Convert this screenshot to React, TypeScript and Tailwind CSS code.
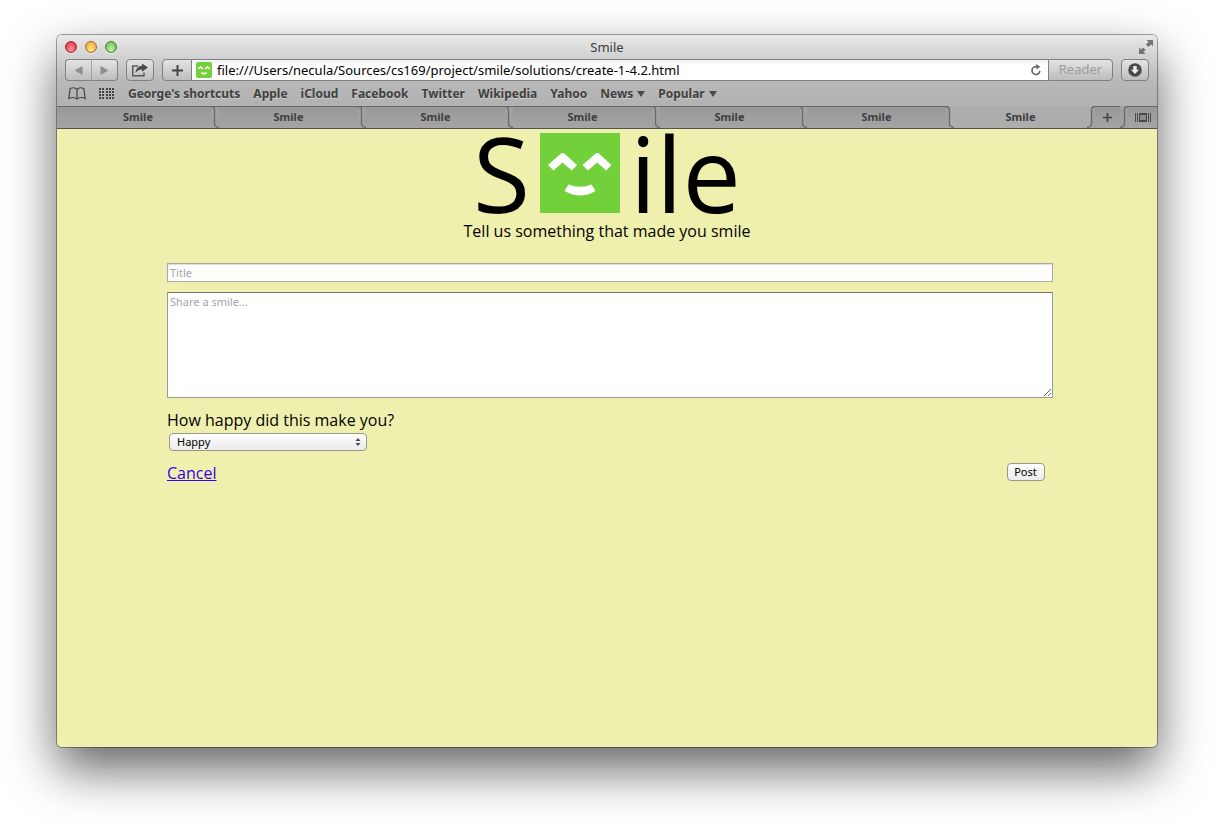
import type { ReactNode } from 'react';

const chromeButton =
  'flex h-[22px] items-center justify-center border border-[#808080] bg-linear-to-b from-[#e4e4e4] to-[#bdbdbd] text-[#444]';

function TrafficLight({ label, tone }: { label: string; tone: string }) {
  return (
    <button
      aria-label={label}
      className={`size-3 rounded-full border shadow-[0_1px_0_#f4f4f4] ${tone}`}
    />
  );
}

function ShareIcon() {
  return (
    <svg width="18" height="14" viewBox="0 0 18 14" fill="none">
      <path d="M7 3H1.700v9.800h11.300V9.500" stroke="#5a5a5a" strokeWidth="1.500" />
      <path d="M11 .5l6 4.1-6 4.1V6.500C8.500 6.400 6.300 7.300 4.500 10 4.800 5.500 7.500 2.900 11 2.700z" fill="#4a4a4a" />
    </svg>
  );
}

function BookIcon() {
  return (
    <svg width="18" height="13" viewBox="0 0 18 13" fill="none" stroke="#444" strokeWidth="1.2">
      <path d="M9 2.500C7.500.700 4.500.500 2.200 1.500L.800 11.500C3.500 10.300 7 10.300 9 12c2-1.700 5.500-1.700 8.200-.500L15.800 1.500C13.500.500 10.500.700 9 2.500zM9 2.500V12" />
    </svg>
  );
}

function GridIcon() {
  return (
    <svg width="16" height="12" viewBox="0 0 16 12" fill="#444" shapeRendering="crispEdges">
      {[0, 3, 6, 9].map((y) =>
        [0, 3, 6, 9, 12].map((x) => <rect key={`${x}-${y}`} x={x + (x > 0 ? x / 12 : 0)} y={y} width="2" height="2" />),
      )}
    </svg>
  );
}

function PlusIcon({ size }: { size: number }) {
  return (
    <svg width={size} height={size} viewBox="0 0 11 11" stroke="#444" strokeWidth="2">
      <path d="M5.500 0v11M0 5.500h11" />
    </svg>
  );
}

function ReloadIcon() {
  return (
    <svg width="12" height="12" viewBox="0 0 12 12" fill="none">
      <path d="M7.500 2.700H5.800a3.900 3.900 0 1 0 4 4.200" stroke="#666" strokeWidth="1.700" />
      <path d="M6.300 0v5.500L10.300 2.700z" fill="#666" />
    </svg>
  );
}

function DownloadIcon() {
  return (
    <svg width="14" height="14" viewBox="0 0 14 14">
      <circle cx="7" cy="7" r="6.800" fill="#4a4a4a" />
      <path d="M5.300 3h3.400v3.700h2.300L7 11 3 6.700h2.300z" fill="#eee" />
    </svg>
  );
}

function FullScreenIcon() {
  return (
    <svg width="14" height="14" viewBox="0 0 14 14" fill="#747474">
      <path d="M7.500 0H14v6.500l-2-2-2.600 2.600L6.900 4.600 9.500 2z" />
      <path d="M6.500 14H0V7.500l2 2L4.100 7.400l2.500 2.500L4.500 12z" />
    </svg>
  );
}

function ShowTabsIcon() {
  return (
    <svg width="16" height="9" viewBox="0 0 16 9" stroke="#4a4a4a" fill="none">
      <path d="M.500 0v9M2.500 0v9M13.500 0v9M15.500 0v9" />
      <path d="M4 1h8M4 8h8" strokeWidth="2" />
      <path d="M4.500 1v7M11.500 1v7" />
      <path d="M5 2h6v5H5z" fill="#8a8a8a" stroke="none" />
    </svg>
  );
}

function SmileFace({ className }: { className: string }) {
  return (
    <svg viewBox="0 0 80 80" className={className}>
      <rect width="80" height="80" fill="#72d13a" />
      <path d="M8 32 20.500 21q2.200-1.800 4.400 0L37 32l-5.200 5.500L22.600 29.500 13.500 37.500zM42.500 32 55 21q2.200-1.800 4.400 0L71.500 32l-5.200 5.500L57.100 29.500 48 37.500z" fill="#fff" />
      <path d="M28.500 51.500q11.500 4.500 23 0L55.500 58q-15 9-31 0z" fill="#fff" />
    </svg>
  );
}

function TabEdge({ flip = false, right }: { flip?: boolean; right: string }) {
  return (
    <svg width="8" height="22" viewBox="0 0 8 22" className={`shrink-0 ${right}`} fill="none">
      {flip ? (
        <>
          <path d="M8 .500Q4.500.500 4.500 4V17Q4.500 21 0 21.500H8z" fill="#a1a1a1" />
          <path d="M8 .500Q4.500.500 4.500 4V17Q4.500 21 0 21.500" stroke="#686868" strokeWidth="1.300" />
        </>
      ) : (
        <>
          <path d="M0 .500Q3.500.500 3.500 4V17Q3.500 21 8 21.500H0z" fill="#a1a1a1" />
          <path d="M0 .500Q3.500.500 3.500 4V17Q3.500 21 8 21.500" stroke="#686868" strokeWidth="1.300" />
          {right === 'bg-[#a1a1a1]' && <path d="M0 .500h8" stroke="#686868" />}
        </>
      )}
    </svg>
  );
}

const inactive = 'border-t border-[#686868] bg-linear-to-b from-[#989898] to-[#a5a5a5]';

function Tab({ className }: { className: string }) {
  return (
    <button role="tab" className={`min-w-0 text-center ${className}`}>
      Smile
    </button>
  );
}

function Bookmark({ children, menu = false }: { children: ReactNode; menu?: boolean }) {
  return (
    <a href="#" className="flex items-center gap-1">
      {children}
      {menu && (
        <svg width="8" height="6" viewBox="0 0 8 6" fill="#4a4a4a">
          <path d="M0 0h8L4 6z" />
        </svg>
      )}
    </a>
  );
}

function BrowserChrome() {
  return (
    <header className="bg-linear-to-b from-[#e9e9e9] via-[#b8b8b8] via-50% to-[#acacac] font-['Lucida_Grande','Noto_Sans',sans-serif]">
      <div className="grid h-6 grid-cols-[1fr_auto_1fr] items-center px-1">
        <div className="flex gap-2 pl-1">
          <TrafficLight label="Close" tone="border-[#9b2a30] bg-radial-[at_50%_75%] from-[#ff9aa0] to-[#dc1f2c]" />
          <TrafficLight label="Minimize" tone="border-[#a5682a] bg-radial-[at_50%_75%] from-[#ffe98a] to-[#ee9d28]" />
          <TrafficLight label="Zoom" tone="border-[#45803c] bg-radial-[at_50%_75%] from-[#c6f5a0] to-[#55b548]" />
        </div>
        <span className="text-[13px] leading-5 text-[#3c3c3c]">Smile</span>
        <button aria-label="Full screen" className="justify-self-end">
          <FullScreenIcon />
        </button>
      </div>

      <div className="flex gap-2 px-2">
        <div className="flex">
          <button aria-label="Back" className={`${chromeButton} w-[27px] rounded-l-[4px] border-r-[#a0a0a0]`}>
            <svg width="9" height="9" viewBox="0 0 9 10" fill="#8f8f8f"><path d="M9 0v10L0 5z" /></svg>
          </button>
          <button aria-label="Forward" className={`${chromeButton} w-[26px] rounded-r-[4px] border-l-0`}>
            <svg width="9" height="9" viewBox="0 0 9 10" fill="#8f8f8f"><path d="M0 0v10l9-5z" /></svg>
          </button>
        </div>
        <button aria-label="Share" className={`${chromeButton} w-7 rounded-[4px]`}>
          <ShareIcon />
        </button>
        <div className="flex min-w-0 flex-1">
          <button aria-label="Add bookmark" className={`${chromeButton} w-[30px] rounded-l-[4px]`}>
            <PlusIcon size={11} />
          </button>
          <div className="flex min-w-0 flex-1 items-center gap-[5px] border-y border-[#808080] bg-linear-to-b from-[#f2f2f2] to-white to-30% pr-1.5 pl-1">
            <SmileFace className="size-4 shrink-0 rounded-[2px]" />
            <input
              aria-label="Address"
              defaultValue="file:///Users/necula/Sources/cs169/project/smile/solutions/create-1-4.2.html"
              className="min-w-0 flex-1 bg-transparent text-[13px] leading-5 text-black outline-none"
            />
            <button aria-label="Reload">
              <ReloadIcon />
            </button>
          </div>
          <button className={`${chromeButton} w-[65px] rounded-r-[4px] text-[13px] text-[#9c9c9c]!`}>Reader</button>
        </div>
        <button aria-label="Downloads" className={`${chromeButton} w-7 rounded-[4px]`}>
          <DownloadIcon />
        </button>
      </div>

      <nav className="flex h-[25px] items-center gap-[13px] pl-[11px] text-[12px] font-bold text-[#404040] [text-shadow:0_1px_0_#cfcfcf]">
        <button aria-label="Show bookmarks"><BookIcon /></button>
        <button aria-label="Top sites"><GridIcon /></button>
        <Bookmark>George's shortcuts</Bookmark>
        <Bookmark>Apple</Bookmark>
        <Bookmark>iCloud</Bookmark>
        <Bookmark>Facebook</Bookmark>
        <Bookmark>Twitter</Bookmark>
        <Bookmark>Wikipedia</Bookmark>
        <Bookmark>Yahoo</Bookmark>
        <Bookmark menu>News</Bookmark>
        <Bookmark menu>Popular</Bookmark>
      </nav>

      <div role="tablist" className="flex h-[23px] border-b border-[#555] text-[11px] font-bold text-[#404040] [text-shadow:0_1px_0_#c4c4c4]">
        <div className={`${inactive} w-2`} />
        <Tab className={`${inactive} flex-[146]`} />
        {[1, 2, 3, 4, 5].map((n) => (
          <div key={n} className="flex min-w-0 flex-[147]">
            <TabEdge right="bg-[#a1a1a1]" />
            <Tab className={`${inactive} flex-1`} />
          </div>
        ))}
        <TabEdge right="bg-[#adadad]" />
        <Tab className="flex-[133] bg-[#adadad]" />
        <TabEdge flip right="bg-[#adadad]" />
        <button aria-label="New tab" className={`${inactive} flex w-[25px] items-center justify-center`}>
          <PlusIcon size={9} />
        </button>
        <TabEdge flip right="bg-[#a1a1a1]" />
        <button aria-label="Show all tabs" className={`${inactive} flex w-[29px] items-center justify-center`}>
          <ShowTabsIcon />
        </button>
      </div>
    </header>
  );
}

const macControl =
  'rounded-[4px] border border-[#9a9a8c] bg-linear-to-b from-white via-[#f3f3f3] to-[#ececec] text-[11px] text-black';

function SmileForm() {
  return (
    <main className="flex-1 bg-[#f0f0ae] font-['Comic_Sans_MS','Open_Sans',sans-serif] text-[16px] text-black">
      <h1 className="flex h-[88px] items-center justify-center font-['Open_Sans',sans-serif] text-[104px] leading-[84px]">
        <span>S</span>
        <SmileFace className="mx-2.5 size-20" />
        <span>ile</span>
      </h1>
      <p className="mt-0.5 text-center leading-6">Tell us something that made you smile</p>

      <form className="pt-5 pr-[9.500%] pl-[10%] font-['Lucida_Grande','Noto_Sans',sans-serif]">
        <input
          aria-label="Title"
          placeholder="Title"
          className="block h-[19px] w-full border border-[#a9a9a9] bg-white px-0.5 text-[11px] shadow-[inset_0_1px_1px_#ddd] placeholder:text-[#a5a5a5]"
        />
        <textarea
          aria-label="Share a smile"
          placeholder="Share a smile..."
          className="mt-2.5 block h-[106px] w-full border border-[#999] border-t-[#707070] bg-white px-0.5 py-px text-[11px] placeholder:text-[#a5a5a5]"
        />
        <label htmlFor="happiness" className="mt-2.5 block font-['Comic_Sans_MS','Open_Sans',sans-serif] leading-6">
          How happy did this make you?
        </label>
        <div className="relative mt-px ml-0.5 w-[198px]">
          <select id="happiness" defaultValue="Happy" className={`${macControl} block h-[18px] w-full appearance-none px-[7px]`}>
            <option>Happy</option>
            <option>Very happy</option>
          </select>
          <svg width="6" height="8" viewBox="0 0 6 8" fill="#444" className="pointer-events-none absolute top-[5px] right-1.5">
            <path d="M3 0l2.500 3h-5zM3 8l2.500-3h-5z" />
          </svg>
        </div>
        <div className="mt-2.5 flex items-start justify-between pr-2">
          <a href="#" className="font-['Comic_Sans_MS','Open_Sans',sans-serif] leading-6 text-[#3300ee] underline">
            Cancel
          </a>
          <button type="button" className={`${macControl} mt-0.5 h-[18px] w-[38px] leading-4`}>
            Post
          </button>
        </div>
      </form>
    </main>
  );
}

export default function App() {
  return (
    <div className="flex min-h-screen flex-col overflow-hidden bg-white px-[57px] pt-[35px] pb-[79px]">
      <div className="flex flex-1 flex-col overflow-hidden rounded-[5px] shadow-[0_0_0_1px_rgba(0,0,0,0.35),0_22px_50px_rgba(0,0,0,0.62)]">
        <BrowserChrome />
        <SmileForm />
      </div>
    </div>
  );
}
